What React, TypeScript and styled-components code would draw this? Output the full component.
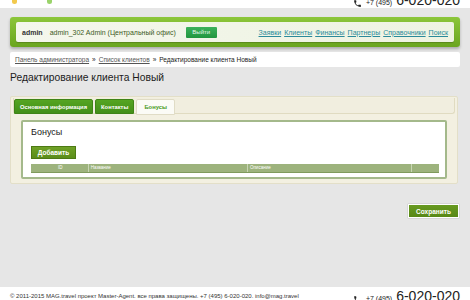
import styled, { createGlobalStyle } from 'styled-components'

const GlobalStyle = createGlobalStyle`
  html, body {
    margin: 0;
    padding: 0;
  }
  body {
    background: #e6e6e6;
    font-family: "Liberation Sans", Arial, sans-serif;
    color: #222;
  }
`

const navLinks = ['Заявки', 'Клиенты', 'Финансы', 'Партнеры', 'Справочники', 'Поиск']

const columns = [
  { title: 'ID', width: 58, center: true },
  { title: 'Название', width: 160 },
  { title: 'Описание', width: 165 },
  { title: '', width: 27 },
]

const PhoneIcon = () => (
  <svg width="9" height="9" viewBox="0 0 24 24">
    <path
      d="M6.6 10.8c1.4 2.8 3.8 5.1 6.6 6.6l2.2-2.2c.3-.3.7-.4 1-.2 1.1.4 2.3.6 3.6.6.6 0 1 .4 1 1V20c0 .6-.4 1-1 1C10.6 21 3 13.4 3 4c0-.6.4-1 1-1h3.5c.6 0 1 .4 1 1 0 1.3.2 2.5.6 3.6.1.3 0 .7-.2 1z"
      fill="#222"
    />
  </svg>
)

const App = () => {
  return (
    <Page>
      <GlobalStyle />
      <TopBar>
        <Logo>
          <Dot color="#f2c94c" />
          <Dot color="#9ad36a" />
        </Logo>
        <TopPhone>
          <PhoneIcon />
          <small>+7 (495)</small> 6-020-020
        </TopPhone>
      </TopBar>
      <Main>
        <Header>
          <HeaderInner>
            <UserName>admin</UserName>
            <UserInfo>admin_302 Admin (Центральный офис)</UserInfo>
            <LogoutButton>Выйти</LogoutButton>
            <Nav>
              {navLinks.map((l) => (
                <NavLink key={l} href="#">
                  {l}
                </NavLink>
              ))}
            </Nav>
          </HeaderInner>
        </Header>
        <Breadcrumbs>
          <Crumb href="#">Панель администратора</Crumb>
          <Sep>»</Sep>
          <Crumb href="#">Список клиентов</Crumb>
          <Sep>»</Sep>
          <span>Редактирование клиента Новый</span>
        </Breadcrumbs>
        <Title>Редактирование клиента Новый</Title>
        <TabsPanel>
          <TabRow>
            <Tab>Основная информация</Tab>
            <Tab>Контакты</Tab>
            <Tab active>Бонусы</Tab>
          </TabRow>
          <ContentBox>
            <BoxTitle>Бонусы</BoxTitle>
            <AddButton>Добавить</AddButton>
            <TableHead>
              {columns.map((c, i) => (
                <HeadCell key={i} style={{ width: c.width }} center={c.center}>
                  {c.title}
                </HeadCell>
              ))}
            </TableHead>
          </ContentBox>
        </TabsPanel>
        <Actions>
          <SaveButton>Сохранить</SaveButton>
        </Actions>
      </Main>
      <Footer>
        <Copy>
          © 2011-2015 MAG.travel проект Master-Agent. все права защищены. +7 (495) 6-020-020. info@mag.travel
        </Copy>
        <FooterPhone>
          <PhoneIcon />
          <small>+7 (495)</small> 6-020-020
        </FooterPhone>
      </Footer>
    </Page>
  )
}

export default App

const Page = styled.div`
  width: 470px;
  height: 300px;
  display: flex;
  flex-direction: column;
  overflow: hidden;
`

const TopBar = styled.div`
  height: 8px;
  background: #fff;
  overflow: hidden;
  display: flex;
  justify-content: space-between;
  padding: 0 10px;
`

const Logo = styled.div`
  display: flex;
  gap: 30px;
  padding-left: 2px;
`

const Dot = styled.div<{ color: string }>`
  width: 5px;
  height: 4px;
  border-radius: 0 0 3px 3px;
  background: ${(p) => p.color};
`

const TopPhone = styled.div`
  margin-top: -13px;
  font-size: 14px;
  line-height: 15px;
  display: flex;
  align-items: flex-end;
  gap: 4px;
  small {
    font-size: 7px;
    line-height: 10px;
  }
`

const Main = styled.div`
  padding: 0 10px 0 10px;
  display: flex;
  flex-direction: column;
`

const Header = styled.div`
  margin-top: 9px;
  height: 30px;
  box-sizing: border-box;
  background: linear-gradient(#8cc63a, #6aa51f);
  border-radius: 3px;
  padding: 5px 6px;
  box-shadow: 0 2px 3px rgba(0, 0, 0, 0.25);
`

const HeaderInner = styled.div`
  height: 20px;
  background: linear-gradient(90deg, #f4f7ec, #eef3e2);
  border-radius: 2px;
  display: flex;
  align-items: center;
  padding: 0 6px;
  font-size: 7px;
  box-shadow: 0 1px 1px rgba(0, 0, 0, 0.2);
`

const UserName = styled.span`
  font-weight: bold;
  color: #333;
  margin-right: 7px;
`

const UserInfo = styled.span`
  color: #3d5a1e;
`

const LogoutButton = styled.span`
  margin-left: 10px;
  width: 31px;
  height: 11px;
  background: linear-gradient(#3bb15a, #22963f);
  border-radius: 1px;
  color: #e8f6ea;
  font-size: 6px;
  display: flex;
  align-items: center;
  justify-content: center;
`

const Nav = styled.div`
  margin-left: auto;
  display: flex;
  gap: 3px;
`

const NavLink = styled.a`
  color: #2a8a9a;
  font-size: 7px;
  text-decoration: underline;
`

const Breadcrumbs = styled.div`
  margin-top: 5px;
  height: 15px;
  background: #fff;
  border-radius: 2px;
  display: flex;
  align-items: center;
  padding: 0 5px;
  font-size: 6.5px;
  color: #222;
`

const Crumb = styled.a`
  color: #555;
  text-decoration: underline;
`

const Sep = styled.span`
  margin: 0 3px;
`

const Title = styled.h1`
  margin: 3px 0 0 0;
  font-size: 10.3px;
  font-weight: normal;
  line-height: 16px;
  color: #1c1c1c;
`

const TabsPanel = styled.div`
  margin-top: 10px;
  margin-right: 2px;
  background: #f3f0e1;
  border: 1px solid #e3dfc8;
  border-radius: 2px;
  padding: 1px 2px 4px 2px;
`

const TabRow = styled.div`
  display: flex;
  gap: 2px;
  height: 16px;
  box-sizing: border-box;
  border: 1px solid #e0dbc1;
  border-top: none;
  border-radius: 0 0 3px 3px;
  background: #f1eedf;
  padding-top: 1px;
`

const Tab = styled.div<{ active?: boolean }>`
  height: 15px;
  box-sizing: border-box;
  padding: 0 5px;
  display: flex;
  align-items: center;
  font-size: 5.8px;
  font-weight: bold;
  border-radius: 2px 2px 0 0;
  color: ${(p) => (p.active ? '#4a9a1d' : '#fff')};
  background: ${(p) => (p.active ? '#fbfbf6' : 'linear-gradient(#55a522, #438f18)')};
  border: 1px solid ${(p) => (p.active ? '#e0dcc6' : '#3f8416')};
  ${(p) => (p.active ? 'padding: 0 7px; height: 16px;' : '')}
`

const ContentBox = styled.div`
  margin: 6px 8px 0 8px;
  background: #fff;
  border: 2px solid #a4b98b;
  border-radius: 2px;
  padding: 4px 6px 4px 8px;
`

const BoxTitle = styled.div`
  font-size: 9px;
  line-height: 12px;
  color: #222;
`

const AddButton = styled.div`
  margin-top: 8px;
  width: 45px;
  height: 13px;
  box-sizing: border-box;
  background: linear-gradient(#6fa126, #5b8d1a);
  border: 1px solid #4d7a14;
  color: #fff;
  font-size: 6.5px;
  font-weight: bold;
  display: flex;
  align-items: center;
  justify-content: center;
`

const TableHead = styled.div`
  margin-top: 5px;
  height: 8px;
  background: #9db37d;
  display: flex;
  border-bottom: 1px solid #7f9a5c;
`

const HeadCell = styled.div<{ center?: boolean }>`
  font-size: 4.5px;
  color: #fff;
  line-height: 8px;
  padding-left: 2px;
  box-sizing: border-box;
  border-right: 1px solid #c8d6b4;
  text-align: ${(p) => (p.center ? 'center' : 'left')};
  &:last-child {
    border-right: none;
  }
`

const Actions = styled.div`
  display: flex;
  justify-content: flex-end;
  margin-top: 20px;
  padding-right: 1px;
`

const SaveButton = styled.div`
  width: 51px;
  height: 14px;
  box-sizing: border-box;
  background: linear-gradient(#679a20, #578816);
  border: 1px solid #fff;
  box-shadow: 0 0 1px rgba(0, 0, 0, 0.4);
  color: #fff;
  font-size: 6.5px;
  font-weight: bold;
  display: flex;
  align-items: center;
  justify-content: center;
`

const Footer = styled.div`
  margin-top: auto;
  height: 13px;
  background: #fff;
  display: flex;
  justify-content: space-between;
  align-items: flex-start;
  padding: 0 10px;
  overflow: hidden;
`

const Copy = styled.div`
  font-size: 6px;
  color: #333;
  margin-top: 6px;
`

const FooterPhone = styled.div`
  margin-top: 2px;
  font-size: 14px;
  line-height: 15px;
  display: flex;
  align-items: flex-end;
  gap: 4px;
  color: #222;
  small {
    font-size: 7px;
    line-height: 10px;
  }
`
